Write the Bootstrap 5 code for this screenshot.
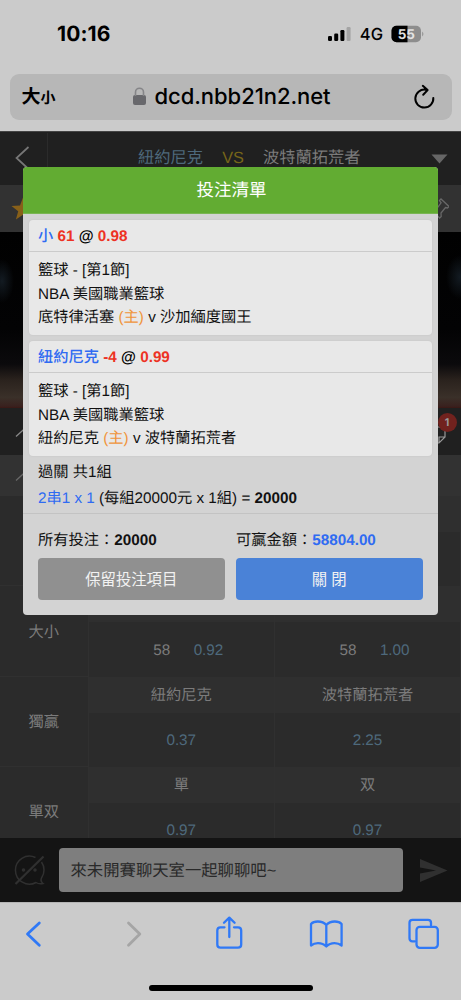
<!DOCTYPE html>
<html lang="zh-Hant">
<head>
<meta charset="utf-8">
<meta name="viewport" content="width=device-width, initial-scale=1">
<title>投注清單</title>
<link rel="stylesheet" href="https://cdn.jsdelivr.net/npm/bootstrap@5.3.0/dist/css/bootstrap.min.css">
<style>
body{margin:0;width:461px;height:1000px;overflow:hidden;background:#cbcbcb;font-family:"Liberation Sans","Noto Sans CJK TC",sans-serif;font-size:15.25px;line-height:23.7px;color:#111;text-rendering:geometricPrecision}
svg{display:block;flex:none}
.phone{width:461px;height:1000px}
.system-bar{height:74px;font-family:Inter,sans-serif;color:#000;padding:0 37px 5px 57px}
.clock{font-size:21px;font-weight:700;letter-spacing:.1px;padding-top:1px}
.carrier{font-size:16.5px;font-weight:500;padding-top:1px}
.address{height:45.5px;margin:0 9.5px 11.5px;border-radius:9px;background:#b7b7b7;color:#000;padding:0 17px 0 12px}
.reader{font-family:"Noto Sans CJK TC",sans-serif;font-weight:600;font-size:19px;width:120px;padding-top:1px}
.reader small{font-size:15px;font-weight:700}
.host{font-family:Inter,sans-serif;font-size:22px;font-weight:500;letter-spacing:-.05px;margin-left:-12px;padding-top:2px}
.page-area{height:771px;background:#2b2b2b;color:#7b7b7b}
.match-bar{height:54px;background:#202020;border-top:1px solid #444;font-size:16.3px;padding-top:1px}
.back-cell{width:48px;height:53px;border-right:1px solid #2b2b2b;padding:0 0 2px 15px}
.home-team,.odd{color:#4e697c}
.versus{color:#776619}
.tool-row{height:47px;background:#323232}
.court{height:176px;background:radial-gradient(ellipse 12px 22px at 2px 49px,#131b22,transparent),radial-gradient(ellipse 14px 22px at 460px 45px,#131b22,transparent),linear-gradient(#010101 0,#030304 55%,#0b0a0c 75%,#2a221d 84%,#3a3029 94%,#39211e 99%,#3b1714)}
.row-dark{height:47px;background:#202020}
.row-mid{height:41px;background:#323232}
.odds-grid{display:grid;grid-template-columns:88.5px 186.5px 186px;grid-template-rows:repeat(8,36.2px 54.1px);height:342px;overflow:hidden}
.odds-grid>div{display:flex;align-items:center;justify-content:center;border-right:1px solid #303030;padding-top:2px}
.odds-grid>.kind{grid-row:span 2;border-bottom:1px solid #303030;padding-top:3px}
.cap{background:#2f2f2f}
.handicap{margin:0 23.5px 0 14px}
.chat-bar{height:64px;background:#141414;padding:0 13px}
.chat-input{width:344px;height:44.5px;border-radius:4px;background:#7e7e7e;color:#292929;font-size:16.35px;padding:3px 0 0 12px;margin-left:13.5px}
.browser-bar{height:98px;background:#cbcbcb;border-top:1px solid #b5b5b5}
.home-line{width:164px;height:6px;border-radius:3px;background:#000;margin:0 0 9px 149px}
.slip{position:absolute;left:23px;top:167px;width:415px;height:448px;background:#d3d3d3;border-radius:4px;overflow:hidden}
.slip-title{height:46.5px;background:#62ac32;color:#fff;font-size:17.5px;border-bottom:1px solid #79b552;padding:3px 0 0 2px}
.bet{height:115px;background:#e8e8e8;border-radius:4px;margin:6px 6px 0;box-shadow:0 0 2px #c2c2c2}
.bet-head{height:32.5px;border-bottom:1px solid #cbcbcb;padding:2.5px 9px 0;font-weight:700;color:#000}
.pick{font-weight:500}
.bet-body{padding:7px 9px 0}
.blue{color:#2f6bf2}.red{color:#ed3223}.orange{color:#f0943b}
.sum{padding:4px 15px 0;height:58.5px;line-height:26px;border-bottom:1px solid #c3c3c3}
.totals{margin:15px 15px 5.5px}
.stake{width:198px}
.act-row{margin:0 15px;gap:11.5px}
.act{height:41.5px;width:186.5px;border-radius:4px;border:0;color:#f2f2f2;font-size:15.35px;padding:2px 0 0}
.act-keep{background:#909090}.act-close{background:#4a82d7}
.count{position:absolute;left:437.5px;top:413px;width:19px;height:19px;border-radius:50%;background:#71221e;color:#999;font:700 10.5px/19px Inter,sans-serif;text-align:center}
</style>
</head>
<body>
<div class="phone d-flex flex-column position-relative">
  <div class="system-bar d-flex align-items-center justify-content-between">
    <span class="clock">10:16</span>
    <div class="d-flex align-items-center">
      <svg width="24" height="16" viewBox="0 0 24 16"><rect x="0" y="10" width="4" height="5" rx="1.2"/><rect x="6.2" y="7.5" width="4" height="7.5" rx="1.2"/><rect x="12.4" y="4" width="4" height="11" rx="1.2"/><rect x="18.6" y="1" width="4" height="14" rx="1.2" fill="#a4a4a4"/></svg>
      <span class="carrier mx-2">4G</span>
      <svg width="33" height="18" viewBox="0 0 33 18"><defs><clipPath id="cell"><rect x=".5" y=".8" width="29.5" height="16.4" rx="5"/></clipPath></defs><g clip-path="url(#cell)"><rect width="31" height="18" fill="#8d8d8d"/><rect width="16.5" height="18"/></g><path d="M31 6.5q3 2.5 0 5z" fill="#9a9a9a"/><text x="15.3" y="13.5" text-anchor="middle" fill="#e2e2e2" font-family="Inter" font-size="13.5" font-weight="700">55</text></svg>
    </div>
  </div>
  <div class="address d-flex align-items-center">
    <span class="reader">大<small>小</small></span>
    <svg width="13" height="19" viewBox="0 0 13 19" style="margin:0 20.5px 0 -8.5px"><rect y="8" width="13" height="10" rx="2" fill="#68686c"/><path d="M2.500 9V5.200a4 4 0 0 1 8 0V9" fill="none" stroke="#858588" stroke-width="1.600"/></svg>
    <span class="host">dcd.nbb21n2.net</span>
    <svg class="ms-auto" width="21" height="26" viewBox="0 0 21 26" fill="none" stroke="#000" stroke-width="2" stroke-linecap="round" stroke-linejoin="round"><path d="M11.500 5.700a9 9 0 1 0 7.800 8.200M8.800 1.800l4.800 4.300-4.400 4.600"/></svg>
  </div>

  <div class="page-area d-flex flex-column">
    <div class="match-bar d-flex align-items-center">
      <div class="back-cell d-flex align-items-center"><svg width="15" height="24" viewBox="0 0 15 24" fill="none" stroke="#777" stroke-width="1.700"><path d="M13.500 1 1.500 12l12 11"/></svg></div>
      <span class="home-team" style="margin-left:90px">紐約尼克</span>
      <span class="versus" style="margin-left:19px">VS</span>
      <span style="margin-left:19px">波特蘭拓荒者</span>
      <svg class="ms-auto" style="margin-right:13px" width="17" height="10" viewBox="0 0 17 10"><path d="M.5.5h16l-8 9z" fill="#666"/></svg>
    </div>
    <div class="tool-row d-flex align-items-center justify-content-between">
      <svg width="24" height="24" viewBox="0 0 24 24" style="margin-left:11px"><path d="m12 .5 3 8 8.500.4-6.700 5.300 2.400 8.300-7.200-4.700-7.100 4.700 2.300-8.300L.5 8.900l8.500-.4z" fill="#886019"/></svg>
      <svg width="24" height="24" viewBox="0 0 24 24" fill="none" stroke="#686868" stroke-width="1.300" style="margin-right:12px"><path d="m14.500 3.500 1.500-1.500 8 7.500-1.500 1.500-2-.5-4.500 5.500.2 3.500-1.600 1.500-8-8 1.500-1.500 3.500.3 4.500-6zM11 16l-6 6"/></svg>
    </div>
    <div class="court"></div>
    <div class="row-dark d-flex align-items-center justify-content-between">
      <svg width="24" height="12" viewBox="0 0 24 12" fill="none" stroke="#888" stroke-width="1.300" style="margin-left:15px"><path d="M1 10.500 12 .5l11 10"/></svg>
      <svg width="20" height="20" viewBox="0 0 20 20" fill="none" stroke="#999" stroke-width="1.200" style="margin:7px 14px 0 0"><path d="M2 2h16v10l-6 6H2zM12 18v-6h6"/></svg>
    </div>
    <div class="row-mid"><svg width="24" height="30" viewBox="0 0 24 30" fill="none" stroke="#686868" stroke-width="1.300" style="margin-left:15px"><path d="M1 25.500 12 15.500l11 10"/></svg></div>
    <div class="odds-grid">
      <div class="kind"></div><div class="cap"></div><div class="cap"></div><div></div><div></div>
      <div class="kind">大小</div><div class="cap"></div><div class="cap"></div>
      <div><span class="handicap">58</span><span class="odd">0.92</span></div>
      <div><span class="handicap">58</span><span class="odd">1.00</span></div>
      <div class="kind">獨贏</div><div class="cap">紐約尼克</div><div class="cap">波特蘭拓荒者</div>
      <div class="odd">0.37</div><div class="odd">2.25</div>
      <div class="kind">單双</div><div class="cap">單</div><div class="cap">双</div>
      <div class="odd">0.97</div><div class="odd">0.97</div>
    </div>
    <div class="chat-bar d-flex align-items-center">
      <svg width="32" height="32" viewBox="0 0 32 32" fill="none" stroke="#303030" stroke-width="1.500"><path d="M22.500 3.500A14 14 0 1 0 23 28.500q3 2 7 1-3-2-1.500-5.500A14 14 0 0 0 28.500 8"/><path d="m2.500 30 28-27.500" stroke-width="2.200"/><circle cx="10.500" cy="16" r="1" fill="#303030"/><circle cx="22" cy="16" r="1" fill="#303030"/></svg>
      <div class="chat-input d-flex align-items-center">來未開賽聊天室一起聊聊吧~</div>
      <svg class="ms-auto" width="28" height="23" viewBox="0 0 28 23"><path d="M0 0 27.500 11.500 0 23v-8.500l16-3L0 8.500z" fill="#303030"/></svg>
    </div>
  </div>

  <div class="browser-bar d-flex flex-column justify-content-between">
    <svg width="461" height="60" viewBox="0 902.5 461 60" fill="none" stroke="#3079f6" stroke-width="2.300" stroke-linecap="round" stroke-linejoin="round">
      <path d="M39.300 922.500 27.500 933.500l11.800 11.300" stroke-width="2.800"/>
      <path d="m128.500 922.500 11.300 11-11.300 11.300" stroke="#a5a5a5" stroke-width="2.800"/>
      <path d="M224.500 926.800h-4q-3.200 0-3.200 3.200v14q0 3.200 3.200 3.200h17.500q3.200 0 3.200-3.200v-14q0-3.200-3.200-3.200h-4M229.300 936.500v-19M224 922.300l5.300-5.200 5.300 5.200"/>
      <path d="M326.300 924.500q-3-3.500-8.500-3.500-4.500 0-6.800 2.500v21.500q3-2.300 7-2.300 5 0 8.300 3.300 3.300-3.300 8.300-3.300 4 0 7 2.300v-21.500q-2.300-2.500-6.800-2.500-5.500 0-8.500 3.500zv20.500"/>
      <path d="M415 940.800h-2.500q-3 0-3-3v-15.500q0-3 3-3h15.500q3 0 3 3v2.500"/><rect x="416.500" y="926.300" width="21.300" height="21" rx="3.200"/>
    </svg>
    <div class="home-line"></div>
  </div>

  <span class="count">1</span>
  <section class="slip">
    <div class="slip-title d-flex align-items-center justify-content-center">投注清單</div>
    <div class="bet">
      <div class="bet-head d-flex align-items-center"><span><span class="blue pick">小</span> <span class="red">61</span> @ <span class="red">0.98</span></span></div>
      <div class="bet-body"><div>籃球 - [第1節]</div><div>NBA 美國職業籃球</div><div>底特律活塞 <span class="orange">(主)</span> v 沙加緬度國王</div></div>
    </div>
    <div class="bet">
      <div class="bet-head d-flex align-items-center"><span><span class="blue pick">紐約尼克</span> <span class="red">-4</span> @ <span class="red">0.99</span></span></div>
      <div class="bet-body"><div>籃球 - [第1節]</div><div>NBA 美國職業籃球</div><div>紐約尼克 <span class="orange">(主)</span> v 波特蘭拓荒者</div></div>
    </div>
    <div class="sum"><div>過關 共1組</div><div><span class="blue">2串1 x 1</span> (每組20000元 x 1組) = <b>20000</b></div></div>
    <div class="totals d-flex"><div class="stake">所有投注：<b>20000</b></div><div>可贏金額：<b class="blue">58804.00</b></div></div>
    <div class="act-row d-flex"><button class="act act-keep btn">保留投注項目</button><button class="act act-close btn">關 閉</button></div>
  </section>
</div>
<script src="https://cdn.jsdelivr.net/npm/bootstrap@5.3.0/dist/js/bootstrap.bundle.min.js"></script>
</body>
</html>
